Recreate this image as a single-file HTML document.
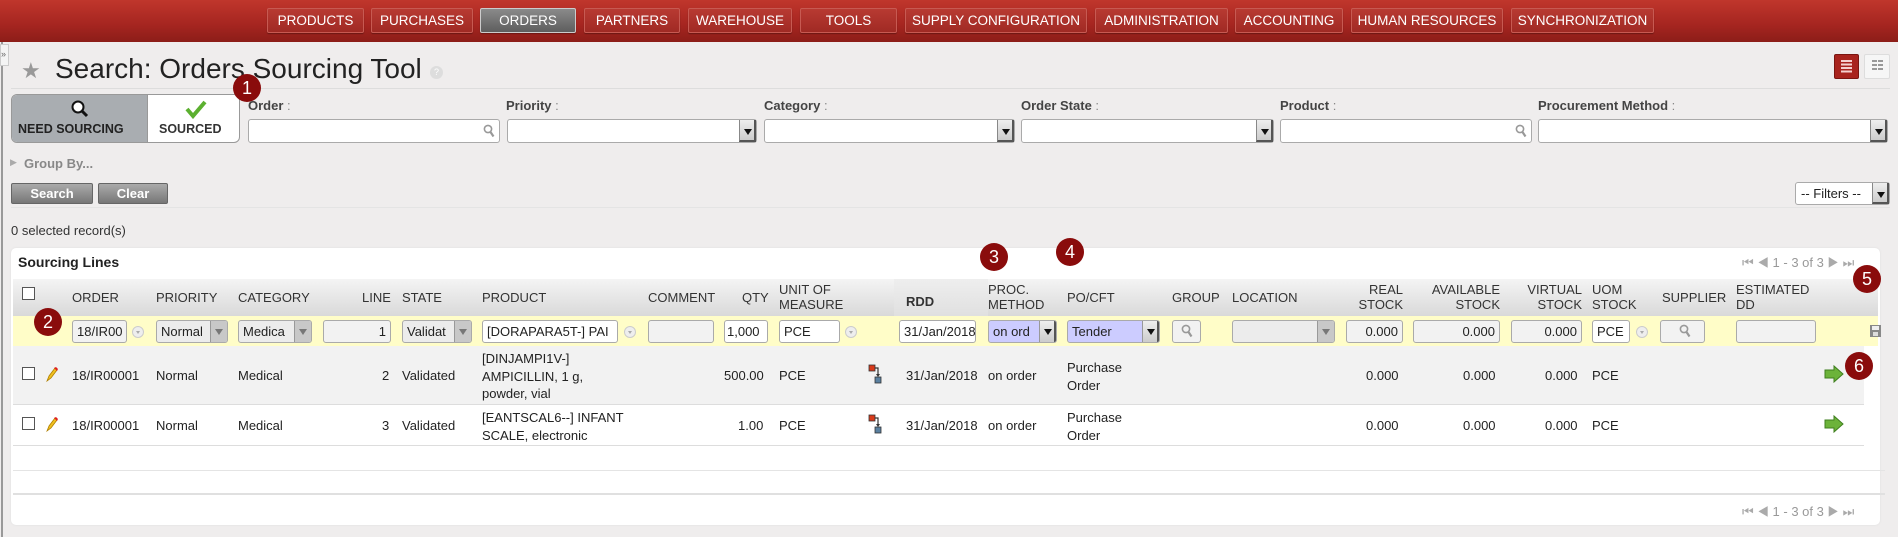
<!DOCTYPE html>
<html><head><meta charset="utf-8"><style>
*{box-sizing:border-box;margin:0;padding:0}
body{width:1898px;height:537px;overflow:hidden;background:#efeded;font-family:"Liberation Sans",Arial,sans-serif;color:#222;position:relative;font-size:13px}
.a{position:absolute;white-space:nowrap}
#nav{position:absolute;left:0;top:0;width:1898px;height:42px;background:linear-gradient(#c0362c,#a52520 60%,#8c1d18)}
.nb{position:absolute;top:8px;height:25px;background:linear-gradient(#b83a32,#a02a24);border:1px solid #c75a52;border-radius:2px;color:#fff;font-size:13.5px;text-align:center;line-height:23px;box-shadow:0 1px 1px rgba(0,0,0,.3)}
.nb.on{background:linear-gradient(#8a8a8a,#5e5e5e);border-color:#ccc}
.lbl{font-weight:bold;color:#444;font-size:13px}
.lbl span{font-weight:normal;color:#888}
.inp{position:absolute;height:24px;background:#fff;border:1px solid #aaa;border-radius:3px}
.dd{position:absolute;right:0;top:0;width:17px;height:100%;background:linear-gradient(#eee,#ccc);border-left:1px solid #888;border-right:2px solid #555;border-bottom:2px solid #555}
.dd:after{content:"";position:absolute;left:4px;top:9px;border:4px solid transparent;border-top:6px solid #111}
.mg{position:absolute;right:4px;top:4px;width:12px;height:14px}
.badge{position:absolute;width:28px;height:28px;border-radius:50%;background:#8a0c0c;color:#fff;font-size:18px;text-align:center;line-height:28px}
.btn{position:absolute;top:183px;height:21px;background:linear-gradient(#aaa,#777);border:1px solid #666;border-radius:2px;color:#fff;font-weight:bold;font-size:13px;text-align:center;line-height:19px}
.th{position:absolute;font-size:13px;color:#333;line-height:15px;white-space:nowrap}
.td{position:absolute;font-size:13px;color:#222;line-height:16px;white-space:nowrap}
.ei{position:absolute;top:320px;height:23px;background:#f2f2f2;border:1px solid #aaa;border-radius:3px;font-size:13px;line-height:21px;padding:0 4px;overflow:hidden;white-space:nowrap;color:#222}
.ei.s{background:#ececec}
.edd{position:absolute;right:0;top:0;width:17px;height:21px;background:#c8c8c8;border-left:1px solid #999}
.edd:after{content:"";position:absolute;left:4px;top:8px;border:4px solid transparent;border-top:6px solid #777}
.edd.k{background:linear-gradient(#eee,#ccc);border-right:2px solid #555}
.edd.k:after{border-top-color:#111}
.rd{position:absolute;width:12px;height:12px;border-radius:50%;background:#eee;border:1px solid #ccc}
.rd:after{content:"";position:absolute;left:3px;top:4px;border:2px solid transparent;border-top:3px solid #aaa}
.cb{position:absolute;width:13px;height:13px;border:1px solid #555;background:#fff}
.arr{position:absolute;width:20px;height:18px}
</style></head><body>
<svg width="0" height="0" style="position:absolute"><defs><symbol id="mg" viewBox="0 0 12 14"><circle cx="5" cy="5" r="3.6" fill="none" stroke="#999" stroke-width="1.6"/><line x1="7.5" y1="8" x2="10.5" y2="12.5" stroke="#999" stroke-width="2.2"/></symbol></defs></svg>
<div id="nav">
<div class="nb" style="left:267px;width:97px">PRODUCTS</div>
<div class="nb" style="left:371px;width:102px">PURCHASES</div>
<div class="nb on" style="left:480px;width:96px">ORDERS</div>
<div class="nb" style="left:584px;width:96px">PARTNERS</div>
<div class="nb" style="left:688px;width:104px">WAREHOUSE</div>
<div class="nb" style="left:800px;width:97px">TOOLS</div>
<div class="nb" style="left:905px;width:182px">SUPPLY CONFIGURATION</div>
<div class="nb" style="left:1095px;width:133px">ADMINISTRATION</div>
<div class="nb" style="left:1235px;width:108px">ACCOUNTING</div>
<div class="nb" style="left:1351px;width:152px">HUMAN RESOURCES</div>
<div class="nb" style="left:1511px;width:143px">SYNCHRONIZATION</div>
</div>
<div class="a" style="left:1px;top:42px;width:2px;height:495px;background:#999"></div>
<div class="a" style="left:0;top:44px;width:9px;height:22px;background:#f4f4f4;border:1px solid #ccc;font-size:9px;color:#666;line-height:18px">»</div>
<div class="a" style="left:21px;top:58px;font-size:22px;color:#999">★</div>
<div class="a" style="left:55px;top:53px;font-size:28px;color:#222">Search: Orders Sourcing Tool</div>
<div class="a" style="left:430px;top:66px;width:13px;height:13px;border-radius:50%;background:#ddd;color:#fff;font-size:9px;text-align:center;line-height:13px">?</div>
<div class="a" style="left:1834px;top:54px;width:25px;height:25px;background:#a8231d;border:1px solid #7a1510;border-radius:2px"><svg width="23" height="23"><g fill="#f5d0ce"><rect x="6" y="5" width="11" height="2"/><rect x="6" y="8.5" width="11" height="2"/><rect x="6" y="12" width="11" height="2"/><rect x="6" y="15.5" width="11" height="2"/></g></svg></div>
<div class="a" style="left:1864px;top:54px;width:26px;height:25px;background:#f6f6f6;border:1px solid #ddd;border-radius:2px"><svg width="24" height="23"><g fill="#999"><rect x="7" y="5" width="5" height="2"/><rect x="13" y="5" width="5" height="2"/><rect x="7" y="9" width="5" height="2"/><rect x="13" y="9" width="5" height="2"/><rect x="7" y="13" width="5" height="2"/><rect x="13" y="13" width="5" height="2"/></g></svg></div>
<div class="a" style="left:11px;top:88px;width:1879px;height:1px;background:#ddd"></div>
<div class="a" style="left:11px;top:94px;width:229px;height:49px;border:1px solid #999;border-radius:6px;overflow:hidden;background:#fff">
<div class="a" style="left:0;top:0;width:136px;height:49px;background:#a9adb1;border-right:1px solid #999"></div>
<svg class="a" style="left:58px;top:4px" width="20" height="20"><circle cx="8" cy="8" r="5.5" fill="#fff" stroke="#111" stroke-width="2"/><line x1="12" y1="12" x2="17" y2="17" stroke="#111" stroke-width="3"/></svg>
<div class="a" style="left:6px;top:27px;font-weight:bold;font-size:12.5px;color:#222">NEED SOURCING</div>
<svg class="a" style="left:173px;top:4px" width="22" height="20"><path d="M2 10 L8 17 L20 3" fill="none" stroke="#5cb030" stroke-width="4"/></svg>
<div class="a" style="left:147px;top:27px;font-weight:bold;font-size:12.5px;color:#333">SOURCED</div>
</div>
<div class="badge" style="left:233px;top:74px">1</div>
<div class="a lbl" style="left:248px;top:98px">Order <span>:</span></div>
<div class="a lbl" style="left:506px;top:98px">Priority <span>:</span></div>
<div class="a lbl" style="left:764px;top:98px">Category <span>:</span></div>
<div class="a lbl" style="left:1021px;top:98px">Order State <span>:</span></div>
<div class="a lbl" style="left:1280px;top:98px">Product <span>:</span></div>
<div class="a lbl" style="left:1538px;top:98px">Procurement Method <span>:</span></div>
<div class="inp" style="left:248px;top:119px;width:252px"><svg class="mg"><use href="#mg"/></svg></div>
<div class="inp" style="left:507px;top:119px;width:250px"><div class="dd"></div></div>
<div class="inp" style="left:764px;top:119px;width:251px"><div class="dd"></div></div>
<div class="inp" style="left:1021px;top:119px;width:253px"><div class="dd"></div></div>
<div class="inp" style="left:1280px;top:119px;width:252px"><svg class="mg"><use href="#mg"/></svg></div>
<div class="inp" style="left:1538px;top:119px;width:350px"><div class="dd"></div></div>
<div class="a" style="left:10px;top:157px;font-size:9px;color:#aaa">▶</div>
<div class="a" style="left:24px;top:156px;font-weight:bold;color:#888;font-size:13px">Group By...</div>
<div class="btn" style="left:11px;width:82px">Search</div>
<div class="btn" style="left:98px;width:70px">Clear</div>
<div class="inp" style="left:1795px;top:182px;width:95px;height:23px;font-size:13px;line-height:21px;padding-left:5px">-- Filters --<div class="dd"></div></div>
<div class="a" style="left:11px;top:207px;width:1879px;height:1px;background:#e4e4e4"></div>
<div class="a" style="left:11px;top:223px;font-size:13px;color:#333">0 selected record(s)</div>
<div class="a" style="left:11px;top:248px;width:1869px;height:277px;background:#fff;border-radius:5px;box-shadow:0 0 2px #ddd"></div>
<div class="a" style="left:18px;top:254px;font-weight:bold;font-size:14px;color:#222">Sourcing Lines</div>
<div class="a" style="left:1742px;top:255px;font-size:13px;color:#aaa">⏮ ◀ <span style="color:#999">1 - 3 of 3</span> ▶ ⏭</div>
<div class="a" style="left:13px;top:279px;width:1865px;height:37px;background:linear-gradient(#f4f4f4,#d9d9d9)"></div>
<div class="a" style="left:894px;top:279px;width:94px;height:37px;background:linear-gradient(#eee,#e0e0e0)"></div>
<div class="cb" style="left:22px;top:287px"></div>
<div class="th" style="left:72px;top:290px">ORDER</div>
<div class="th" style="left:156px;top:290px">PRIORITY</div>
<div class="th" style="left:238px;top:290px">CATEGORY</div>
<div class="th" style="left:362px;top:290px">LINE</div>
<div class="th" style="left:402px;top:290px">STATE</div>
<div class="th" style="left:482px;top:290px">PRODUCT</div>
<div class="th" style="left:648px;top:290px">COMMENT</div>
<div class="th" style="left:742px;top:290px">QTY</div>
<div class="th" style="left:779px;top:282px">UNIT OF<br>MEASURE</div>
<div class="th" style="left:906px;top:294px;font-weight:bold">RDD</div>
<div class="th" style="left:988px;top:282px">PROC.<br>METHOD</div>
<div class="th" style="left:1067px;top:290px">PO/CFT</div>
<div class="th" style="left:1172px;top:290px">GROUP</div>
<div class="th" style="left:1232px;top:290px">LOCATION</div>
<div class="th" style="left:1353px;top:282px;text-align:right;width:50px">REAL<br>STOCK</div>
<div class="th" style="left:1420px;top:282px;text-align:right;width:80px">AVAILABLE<br>STOCK</div>
<div class="th" style="left:1510px;top:282px;text-align:right;width:72px">VIRTUAL<br>STOCK</div>
<div class="th" style="left:1592px;top:282px">UOM<br>STOCK</div>
<div class="th" style="left:1662px;top:290px">SUPPLIER</div>
<div class="th" style="left:1736px;top:282px">ESTIMATED<br>DD</div>
<div class="a" style="left:13px;top:316px;width:1865px;height:30px;background:#fffdc8"></div>
<div class="ei" style="left:72px;width:55px">18/IR00</div><div class="rd" style="left:132px;top:326px"></div>
<div class="ei s" style="left:156px;width:72px">Normal<div class="edd"></div></div>
<div class="ei s" style="left:238px;width:74px">Medica<div class="edd"></div></div>
<div class="ei" style="left:323px;width:68px;text-align:right">1</div>
<div class="ei s" style="left:402px;width:70px">Validat<div class="edd"></div></div>
<div class="ei" style="left:482px;width:136px;background:#fff">[DORAPARA5T-] PAI</div><div class="rd" style="left:624px;top:326px"></div>
<div class="ei" style="left:648px;width:66px"></div>
<div class="ei" style="left:724px;width:44px;background:#fff;padding:0 2px">1,000</div>
<div class="ei" style="left:779px;width:61px;background:#fff">PCE</div><div class="rd" style="left:845px;top:326px"></div>
<div class="ei" style="left:899px;width:77px;background:#fff">31/Jan/2018</div>
<div class="ei" style="left:988px;width:69px;background:#ccccff">on ord<div class="edd k"></div></div>
<div class="ei" style="left:1067px;width:93px;background:#ccccff">Tender<div class="edd k"></div></div>
<div class="ei" style="left:1172px;width:29px"><svg class="mg" style="right:7px;top:3px"><use href="#mg"/></svg></div>
<div class="ei s" style="left:1232px;width:103px"><div class="edd"></div></div>
<div class="ei" style="left:1346px;width:57px;text-align:right">0.000</div>
<div class="ei" style="left:1413px;width:87px;text-align:right">0.000</div>
<div class="ei" style="left:1511px;width:71px;text-align:right">0.000</div>
<div class="ei" style="left:1592px;width:38px;background:#fff">PCE</div><div class="rd" style="left:1636px;top:326px"></div>
<div class="ei" style="left:1660px;width:45px"><svg class="mg" style="right:13px;top:3px"><use href="#mg"/></svg></div>
<div class="ei" style="left:1736px;width:80px"></div>
<svg class="a" style="left:1869px;top:324px" width="13" height="14"><rect x="1" y="1" width="11" height="12" fill="#888"/><rect x="3" y="2" width="7" height="4" fill="#eee"/><rect x="4" y="8" width="5" height="4" fill="#ddd"/></svg>
<div class="badge" style="left:34px;top:308px">2</div>
<div class="badge" style="left:980px;top:243px">3</div>
<div class="badge" style="left:1056px;top:238px">4</div>
<div class="badge" style="left:1853px;top:265px">5</div>
<div class="a" style="left:13px;top:346px;width:1851px;height:59px;background:#f2f2f2;border-bottom:1px solid #ddd"></div>
<div class="a" style="left:13px;top:405px;width:1851px;height:41px;border-bottom:1px solid #ddd"></div>
<div class="a" style="left:13px;top:470px;width:1872px;height:1px;background:#e4e4e4"></div>
<div class="a" style="left:13px;top:493px;width:1872px;height:2px;background:#e0e0e0"></div>
<div class="a" style="left:1742px;top:504px;font-size:13px;color:#aaa">⏮ ◀ <span style="color:#999">1 - 3 of 3</span> ▶ ⏭</div>

<div class="cb" style="left:22px;top:367px"></div>
<svg class="a" style="left:44px;top:367px" width="14" height="16"><path d="M3 14 L5 9 L11 1 L13 3 L7 11 Z" fill="#f0c020" stroke="#b08000" stroke-width=".8"/><path d="M10 1 L12 0 L14 2 L13 4 Z" fill="#e02020"/></svg>
<div class="td" style="left:72px;top:368px">18/IR00001</div>
<div class="td" style="left:156px;top:368px">Normal</div>
<div class="td" style="left:238px;top:368px">Medical</div>
<div class="td" style="left:382px;top:368px">2</div>
<div class="td" style="left:402px;top:368px">Validated</div>
<div class="td" style="left:482px;top:350px;line-height:17.5px">[DINJAMPI1V-]<br>AMPICILLIN, 1 g,<br>powder, vial</div>
<div class="td" style="left:724px;top:368px">500.00</div>
<div class="td" style="left:779px;top:368px">PCE</div>
<div class="td" style="left:906px;top:368px">31/Jan/2018</div>
<div class="td" style="left:988px;top:368px">on order</div>
<div class="td" style="left:1067px;top:359px;line-height:18px">Purchase<br>Order</div>
<div class="td" style="left:1366px;top:368px">0.000</div>
<div class="td" style="left:1463px;top:368px">0.000</div>
<div class="td" style="left:1545px;top:368px">0.000</div>
<div class="td" style="left:1592px;top:368px">PCE</div>

<div class="cb" style="left:22px;top:417px"></div>
<svg class="a" style="left:44px;top:417px" width="14" height="16"><path d="M3 14 L5 9 L11 1 L13 3 L7 11 Z" fill="#f0c020" stroke="#b08000" stroke-width=".8"/><path d="M10 1 L12 0 L14 2 L13 4 Z" fill="#e02020"/></svg>
<div class="td" style="left:72px;top:418px">18/IR00001</div>
<div class="td" style="left:156px;top:418px">Normal</div>
<div class="td" style="left:238px;top:418px">Medical</div>
<div class="td" style="left:382px;top:418px">3</div>
<div class="td" style="left:402px;top:418px">Validated</div>
<div class="td" style="left:482px;top:409px;line-height:18px">[EANTSCAL6--] INFANT<br>SCALE, electronic</div>
<div class="td" style="left:738px;top:418px">1.00</div>
<div class="td" style="left:779px;top:418px">PCE</div>
<div class="td" style="left:906px;top:418px">31/Jan/2018</div>
<div class="td" style="left:988px;top:418px">on order</div>
<div class="td" style="left:1067px;top:409px;line-height:18px">Purchase<br>Order</div>
<div class="td" style="left:1366px;top:418px">0.000</div>
<div class="td" style="left:1463px;top:418px">0.000</div>
<div class="td" style="left:1545px;top:418px">0.000</div>
<div class="td" style="left:1592px;top:418px">PCE</div>

<svg class="a" style="left:868px;top:364px" width="16" height="20"><rect x="1" y="1" width="6" height="6" fill="#d83a1a" stroke="#333" stroke-width=".8"/><path d="M7 4 H10 V11" fill="none" stroke="#333" stroke-width="1.2"/><path d="M8 10 L10 13 L12 10Z" fill="#333"/><rect x="7" y="13" width="6" height="6" fill="#5a80a0" stroke="#333" stroke-width=".8"/></svg>
<svg class="a" style="left:868px;top:414px" width="16" height="20"><rect x="1" y="1" width="6" height="6" fill="#d83a1a" stroke="#333" stroke-width=".8"/><path d="M7 4 H10 V11" fill="none" stroke="#333" stroke-width="1.2"/><path d="M8 10 L10 13 L12 10Z" fill="#333"/><rect x="7" y="13" width="6" height="6" fill="#5a80a0" stroke="#333" stroke-width=".8"/></svg>
<svg class="arr" style="left:1824px;top:365px" viewBox="0 0 20 18"><path d="M1 5 H10 V1 L19 9 L10 17 V13 H1 Z" fill="#6cb33a" stroke="#3f7f1f"/></svg>
<svg class="arr" style="left:1824px;top:415px" viewBox="0 0 20 18"><path d="M1 5 H10 V1 L19 9 L10 17 V13 H1 Z" fill="#6cb33a" stroke="#3f7f1f"/></svg>
<div class="badge" style="left:1845px;top:352px">6</div>
</body></html>
